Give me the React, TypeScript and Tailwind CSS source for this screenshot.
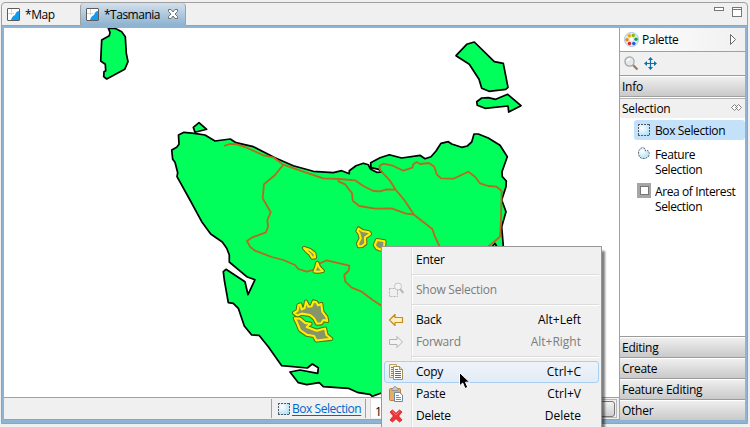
import React from 'react';

const LAND = [
  '178.5,135 184,132.3 194.3,133.3 205,135 215,141 230.3,139 236,142.7 253.3,146.7 275,157.7 293.3,165.7 313.3,171.3 333.3,172.7 341.7,170.7 349.3,173.7 349.3,170.7 356,165.7 363.3,163.3 368.3,164.7 370.3,169 376.7,172.3 381.7,172 378.7,169.3 371,167.7 370.7,162.7 380,157.7 389.3,154.7 401.7,158 420,155.3 425,158.7 431,156.7 436,151 441,143.3 448.3,141.7 451.7,144 461.7,147.3 467.3,146 471.7,142 474,134 478.3,134 488.3,138 500,145.3 507.3,156.7 502,171.7 502.3,176.7 506.3,181 506,186.7 501.7,200 506,211.7 501.7,226.7 503.3,246 503,260 497,247 495,243.5 492,247 490,300 450,396 390,396 380.7,393.3 372.3,396.3 370,394.3 358.3,392.7 348.3,388.3 323.3,386.7 319.3,382.7 306.7,384.7 298.3,382.7 290,372 300,370 317.7,373.3 318.3,367.7 312.3,364 307.3,368 281.7,365.7 268.3,346.7 259,335.3 251.7,335 244.3,326 238.3,308.3 233.3,303.3 228.3,302.7 224.3,280 223.3,271.7 226,269.3 245,281.7 248,294.7 255,279.7 246.7,276.7 229.3,262 229.3,255 226.7,248.3 222.3,242 210.7,234 201.7,221.7 190,200 177,176.7 177.7,172.7 175,162.3 172.7,159.3 171.7,150 176.7,147.3 179,144.3',
  '109,30 108.3,28.3 115,28.3 121.7,31.7 125.3,36.7 126.3,53.3 128,61.7 124.7,69.3 106.7,79 103.7,76.7 104,71.7 105.7,70.7 105.3,64.3 100.7,61 101.7,40 109.3,35.7 110,32.3',
  '199,122.7 206.7,129.3 195,132.3 193.3,127.3',
  '474.3,42 494.3,61.7 503.3,63.3 508,87.3 505.7,89.3 489,91.3 481.7,88.3 479,79.3 469.3,64.3 456,55.7 466.7,44.3',
  '476.7,101.7 481.7,98 488.3,97.7 495.7,99.3 507.7,94.3 521,105.7 508.7,112 508,106 485,108.3 477.3,105.3',
];

const ROADS = [
  '224,146 229.3,144 237,144.3 246.7,147.7 263.3,155.3 273.3,157.3 283.3,164.7 303.3,171.7 323.3,178.3 340,179 355,180.3 363.3,186 373.3,191 380,191.3 386.7,189.3 395.7,189.7',
  '283.3,164.7 275,175 264,184.3 262.7,198.3 270.7,212.3 267.3,220 268,226.7 266,232.3 251.7,237.7 247,241 250,246.7 255,250.7 271.7,257 283.3,260 295,265 298.3,269 306.7,271.7 316.7,269 320,263.3 326.7,260.3 349.3,265.7 348.7,270.7 344.3,275 345.3,281.7 351.7,287.7 361.7,291.7 372.7,300 380.7,305.3 390,312',
  '338,179 339,181.7 345,184.3 352,193.3 352.7,200.7 359.3,206 375,208.7 391.7,208.3 405,213.3 414,214.7',
  '380,170 390,180.7 395.7,189.7 405,201 414,214.7 432.3,229 435,236.7 439.3,246 442,252',
  '380,170 379.3,166 383.3,163.7 391.7,165.3 403.3,170.7 412.3,167.7 413.3,164.3 416.7,162 420,164 429,163 434.3,166.7 436.7,174.3 441,178.3 453.3,178.7 468.3,171.7 475,176.7 480,183.3 488.3,186 496.7,186.7 501.7,191 500.7,226.7 500,236.7 490,245.3 484,250',
];

const LAKES = [
  '304,248 310,250 314.3,253.3 315,257.3 312.3,257.7 310,254 307,251.5',
  '317.3,262.8 319,267 322.8,271 318.3,271.8 314.5,271.5 316,267.7',
  '358.6,228.5 362.3,231 369,232.2 370,234 365,237.3 365.3,243.5 362,246 358.8,246.2 358,243.5 360.7,238.3 359.3,233.3 357.5,231',
  '374.8,245 377,240 380,240.5 384.5,241.3 384.2,245 384,248.5 380,249.5 376.7,248',
  '294,313 297.6,310.7 298.4,305.3 300.4,304.4 301.7,309.4 304.6,308 306,301.6 308.5,306.7 311.5,306.3 313.5,301.5 316.3,302.2 318,305.3 321.3,304 322.3,311.7 326.3,316.9 327.2,321 323.3,320 321.2,323.3 317,323.6 314,318.3 310,315 301.7,313.6 297.3,315.5',
  '294.8,318.3 300,318.6 305,322.9 310.5,323.7 306.7,327 316.7,330.7 325,328.6 326.5,335 331.2,338.8 316.4,340.5 314,336 306.7,334.7 300,330 297.3,323.3',
];

function MapView() {
  return (
    <svg className="block h-[369px] w-[615px]" viewBox="4 28 615 369">
      <rect x="4" y="28" width="615" height="369" fill="#fff" />
      {LAND.map((p, i) => (
        <polygon key={i} points={p} fill="#00ff5a" stroke="#000" strokeWidth="1.7" strokeLinejoin="round" />
      ))}
      {ROADS.map((p, i) => (
        <polyline key={i} points={p} fill="none" stroke="#b86a1e" strokeWidth="1.8" strokeLinejoin="round" />
      ))}
      {LAKES.map((p, i) => (
        <g key={i} strokeLinejoin="round">
          <polygon points={p} fill="#86946a" stroke="#5a7018" strokeWidth="4.2" />
          <polygon points={p} fill="#86946a" stroke="#ffee00" strokeWidth="2.1" />
        </g>
      ))}
    </svg>
  );
}

function MapFileIcon() {
  return (
    <svg className="block h-[13px] w-[13px] shrink-0" viewBox="0 0 13 13">
      <rect x=".5" y=".5" width="12" height="12" rx=".5" fill="#fff" stroke="#5c5c5c" />
      <path d="M4.500 1v6M1 5.500h6" stroke="#d5d5d5" />
      <path d="M12 3C9 3.500 9 5 8 7C6 8 5 9 4 12H12Z" fill="#139bf4" />
    </svg>
  );
}

function BoxIcon() {
  return (
    <svg className="block h-[12px] w-[12px] shrink-0" viewBox="0 0 12 12">
      <defs>
        <radialGradient id="boxFill" cx=".35" cy=".35" r=".75">
          <stop offset="0" stopColor="#fff" />
          <stop offset="1" stopColor="#a9dcf5" />
        </radialGradient>
      </defs>
      <rect width="12" height="12" fill="url(#boxFill)" />
      <path d="M0 .5H12M0 11.500H12M.5 0V12M11.500 0V12" stroke="#4f5b66" strokeDasharray="2 1" />
    </svg>
  );
}

function LassoIcon() {
  return (
    <svg className="block h-[12px] w-[12px] shrink-0" viewBox="0 0 12 12">
      <path d="M2.500 1.500L4.500 .5L7 1.500L7.500 4L10 3.500L11.500 6.500L10.500 9.500L7.500 11.500H4L1.500 10L.5 7V4Z" fill="url(#boxFill)" stroke="#5d6c79" strokeDasharray="2 1" />
    </svg>
  );
}

function PaletteIcon() {
  const dots = [
    [5.3, 3.8, '#f0a800'], [9.3, 3.4, '#8cb800'], [12, 7.3, '#12a63c'],
    [9.8, 11.5, '#2258d8'], [5.5, 11.5, '#e02020'], [3, 7.7, '#f08a00'],
  ] as const;
  return (
    <svg className="block h-[15px] w-[15px] shrink-0" viewBox="0 0 15 15">
      <circle cx="7.500" cy="7.500" r="7" fill="#dcebf9" stroke="#a9c6e2" />
      {dots.map(([x, y, c]) => (
        <circle key={c} cx={x} cy={y} r="1.700" fill={c} />
      ))}
      <circle cx="7.500" cy="7.500" r="1.400" fill="#fff" />
    </svg>
  );
}

function Drawer({ label }: { label: string }) {
  return (
    <div className="flex h-[21px] items-center border-t border-[#9b9b9b] bg-linear-to-b from-[#f1f1f1] to-[#c9c9c9] pl-[2px] shadow-[inset_0_1px_0_#fff]">
      <span className="pt-px tracking-[-0.26px]">{label}</span>
    </div>
  );
}

function PalettePanel() {
  return (
    <div className="flex w-[126px] flex-col border-l border-[#a0a0a0] bg-white">
      <div className="flex h-[23px] items-center bg-linear-to-r from-white to-[#f0f0f0] pr-[8px] pl-[4px]">
        <PaletteIcon />
        <span className="ml-[3px] pt-px tracking-[-0.35px]">Palette</span>
        <svg className="ml-auto h-[11px] w-[8px]" viewBox="0 0 8 11">
          <path d="M1.500 .5V10.500L6.500 5.500Z" fill="#fff" stroke="#6b6b6b" />
        </svg>
      </div>
      <div className="flex h-[24px] items-center gap-[5px] border-t border-[#a0a0a0] bg-[#f0f0f0] pl-[4px]">
        <svg className="h-[15px] w-[15px]" viewBox="0 0 15 15">
          <path d="M9 9L13.500 13.500" stroke="#a07850" strokeWidth="2.200" />
          <circle cx="5.500" cy="5.500" r="4.600" fill="#e4e9ec" stroke="#a2a2a2" strokeWidth="1.200" />
          <path d="M3 5Q4 3 6 3" fill="none" stroke="#fff" strokeWidth="1.400" />
        </svg>
        <svg className="h-[13px] w-[13px]" viewBox="0 0 13 13">
          <path d="M6.500 1V12M1 6.500H12" stroke="#116fa8" strokeWidth="1.200" />
          <path d="M6.500 0L9 3H4ZM6.500 13L4 10H9ZM0 6.500L3 4V9ZM13 6.500L10 9V4Z" fill="#116fa8" />
        </svg>
      </div>
      <Drawer label="Info" />
      <div className="flex h-[22px] items-center border-t border-[#a0a0a0] bg-[#f0f0f0] pr-[3px] pl-[2px] shadow-[inset_0_1px_0_#fff,inset_0_2px_0_#b4b4b4]">
        <span className="pt-[2px]">Selection</span>
        <svg className="ml-auto h-[7px] w-[11px]" viewBox="0 0 11 7">
          <path d="M3.500 .5L.5 3.500L3.500 6.500L6.500 3.500ZM7.500 .5L10.500 3.500L7.500 6.500L4.500 3.500Z" fill="#fff" stroke="#666" strokeWidth=".8" />
        </svg>
      </div>
      <div className="flex flex-col pt-[2px] pl-[14px]">
        <div className="flex h-[20px] items-center gap-[5px] rounded-[3px] bg-[#c4e1fa] pl-[4px]">
          <BoxIcon />
          <span className="pt-[2px] tracking-[-0.38px]">Box Selection</span>
        </div>
        <div className="mt-[7px] flex gap-[5px] pl-[4px] leading-[15px]">
          <LassoIcon />
          <div className="tracking-[-0.38px]">
            <div>Feature</div>
            <div>Selection</div>
          </div>
        </div>
        <div className="mt-[7px] flex gap-[4px] pl-[3px] leading-[15px]">
          <div className="mt-[-1px] flex h-[15px] w-[14px] items-center justify-center bg-[#a6a6a6]">
            <div className="h-[9px] w-[9px] border border-[#777] bg-white" />
          </div>
          <div className="tracking-[-0.4px] whitespace-nowrap">
            <div>Area of Interest</div>
            <div>Selection</div>
          </div>
        </div>
      </div>
      <div className="mt-auto">
        <Drawer label="Editing" />
        <Drawer label="Create" />
        <Drawer label="Feature Editing" />
        <Drawer label="Other" />
      </div>
    </div>
  );
}

function ShowSelectionIcon() {
  return (
    <svg className="h-[16px] w-[16px]" viewBox="0 0 16 16" fill="none">
      <rect x="1.500" y="6.500" width="8" height="8" stroke="#b5b5b5" strokeDasharray="2 1" />
      <circle cx="10" cy="4.500" r="3.500" fill="#f4f4f4" stroke="#c4c4c4" />
      <path d="M12 7L15.500 11" stroke="#b9b9b9" strokeWidth="2" />
    </svg>
  );
}

function ArrowIcon({ forward }: { forward?: boolean }) {
  return (
    <svg className="h-[16px] w-[16px]" viewBox="0 0 16 16">
      {forward ? (
        <path d="M14.500 8L9 2.500V5.500H1.500V10.500H9V13.500Z" fill="#f3f3f3" stroke="#b3b3b3" strokeLinejoin="round" />
      ) : (
        <path d="M1.500 8L7 2.500V5.500H14.500V10.500H7V13.500Z" fill="#fff0c0" stroke="#c88a1c" strokeWidth="1.200" strokeLinejoin="round" />
      )}
    </svg>
  );
}

function CopyIcon() {
  return (
    <svg className="h-[16px] w-[16px]" viewBox="0 0 16 16">
      <path d="M1.500 .5H8.500V13.500H1.500Z" fill="#f8f4e4" stroke="#bda264" />
      <path d="M3 3.500H5M3 5.500H5M3 7.500H5M3 9.500H5M3 11.500H5" stroke="#5b82b8" />
      <path d="M5.500 2.500H11.500L14.500 5.500V15.500H5.500Z" fill="#fff" stroke="#a18f62" />
      <path d="M11.500 2.500V5.500H14.500" fill="#ead9a5" stroke="#a18f62" />
      <path d="M7 5.500H10M7 7.500H13M7 9.500H13M7 11.500H13M7 13.500H13" stroke="#4872ad" />
    </svg>
  );
}

function PasteIcon() {
  return (
    <svg className="h-[16px] w-[16px]" viewBox="0 0 16 16">
      <rect x="1.500" y="2.500" width="11" height="12" rx="1" fill="#e5ae62" stroke="#b98340" />
      <path d="M4 4.500V2.500H5L6 .8H8L9 2.500H10V4.500Z" fill="#c9cdd2" stroke="#8c8c8c" strokeWidth=".8" />
      <path d="M6.500 6.500H11.500L14.500 9V15.500H6.500Z" fill="#fff" stroke="#6b87ac" />
      <path d="M8 9.500H11M8 11.500H13M8 13.500H13" stroke="#7394c2" />
    </svg>
  );
}

function DeleteIcon() {
  return (
    <svg className="h-[16px] w-[16px]" viewBox="0 0 16 16">
      <path d="M2 4L4.500 2L8 5.300L11.500 2L14 4L10.600 8L14 12L11.500 14L8 10.700L4.500 14L2 12L5.400 8Z" fill="#ee3434" stroke="#d01c24" strokeWidth=".8" strokeLinejoin="round" />
      <path d="M4.500 3.500L8 7L11.500 3.500" fill="none" stroke="#ff8080" strokeWidth=".8" />
    </svg>
  );
}

type ItemProps = { label: string; keys?: string; icon?: React.ReactNode; off?: boolean; hot?: boolean };

function Item({ label, keys, icon, off, hot }: ItemProps) {
  return (
    <div
      className={
        'mx-[2px] flex h-[22px] items-center rounded-[3px] border pr-[17px] pl-[3px] ' +
        (hot ? 'border-[#a9cff2] bg-linear-to-b from-[#eff3f8] to-[#e2ecf6] ' : 'border-transparent ') +
        (off ? 'text-[#7c7c7c]' : 'text-black')
      }
    >
      <div className="w-[28px]">{icon}</div>
      <span>{label}</span>
      <span className="ml-auto tracking-[0px]">{keys}</span>
    </div>
  );
}

function Rule() {
  return <div className="my-[3px] mr-[2px] ml-[30px] h-[2px] border-t border-[#dcdcdc] bg-white" />;
}

function ContextMenu() {
  return (
    <div className="absolute top-[246px] left-[381px] h-[190px] w-[221px] border border-[#979797] bg-[#f0f0f0] pt-[2px] shadow-[4px_4px_2px_-1px_rgba(0,0,0,0.5)]">
      <div className="absolute top-[2px] left-[29px] h-[190px] w-[2px] border-l border-[#e0e0e0] bg-white" />
      <div className="relative">
        <Item label="Enter" />
        <Rule />
        <Item label="Show Selection" icon={<ShowSelectionIcon />} off />
        <Rule />
        <Item label="Back" keys="Alt+Left" icon={<ArrowIcon />} />
        <Item label="Forward" keys="Alt+Right" icon={<ArrowIcon forward />} off />
        <Rule />
        <Item label="Copy" keys="Ctrl+C" icon={<CopyIcon />} hot />
        <Item label="Paste" keys="Ctrl+V" icon={<PasteIcon />} />
        <Item label="Delete" keys="Delete" icon={<DeleteIcon />} />
      </div>
      <svg className="absolute top-[124px] left-[76px] h-[20px] w-[14px]" viewBox="0 0 14 20">
        <path d="M1.500 1.500V15L4.700 12L7 17.500L9.800 16.300L7.500 11.200H11.700Z" fill="#000" stroke="#fff" />
      </svg>
    </div>
  );
}

export default function App() {
  return (
    <div className="relative h-[427px] w-[750px] overflow-hidden bg-[#f0f0f0] pt-[2px] pl-px font-['Open_Sans','Noto_Sans',sans-serif] text-[12px] leading-[16px] tracking-[-0.25px] text-black">
      <div className="flex h-[422px] w-[747px] flex-col rounded-t-[4px] border border-[#a0a0a0]">
        <div className="flex h-[22px] shrink-0">
          <div className="flex w-[78px] items-center pl-[5px]">
            <MapFileIcon />
            <span className="ml-[5px] pt-[2px] tracking-[-0.4px]">*Map</span>
          </div>
          <div className="flex w-[106px] items-center rounded-t-[4px] border-x border-[#a0a0a0] bg-linear-to-b from-[#d3e0eb] to-[#8fb3d2] pl-[5px]">
            <MapFileIcon />
            <span className="ml-[5px] w-[56px] pt-[2px] tracking-[-0.5px]">*Tasmania</span>
            <svg className="ml-[8px] h-[10px] w-[10px]" viewBox="0 0 10 10">
              <path d="M.5 .5H3L5 3L7 .5H9.500V2.500L7 5L9.500 7.500V9.500H7L5 7L3 9.500H.5V7.500L3 5L.5 2.500Z" fill="#fff" stroke="#666" strokeWidth=".9" />
            </svg>
          </div>
          <div className="flex grow justify-end gap-[8px] pt-[4px] pr-[5px]">
            <div className="h-[4px] w-[10px] border border-[#777] bg-white" />
            <div className="h-[10px] w-[10px] border border-[#777] bg-white">
              <div className="mt-px h-px bg-[#777]" />
            </div>
          </div>
        </div>
        <div className="flex h-[3px] shrink-0 bg-[#8fb3d2]">
          <div className="h-px w-[78px] bg-[#a0a0a0]" />
          <div className="w-[106px]" />
          <div className="h-px grow bg-[#a0a0a0]" />
        </div>
        <div className="flex h-[395px] border-x-2 border-b-[3px] border-[#8fb3d2]">
          <div className="flex w-[615px] flex-col">
            <MapView />
            <div className="flex h-[23px] border-y border-[#a0a0a0] bg-[#f0f0f0] py-px">
              <div className="w-[268px] border-r border-[#a0a0a0]" />
              <div className="flex w-[94px] items-center gap-[2px] border-r border-[#a0a0a0] pl-[6px]">
                <BoxIcon />
                <span className="pt-px tracking-[-0.45px] whitespace-nowrap text-[#0066cc] underline underline-offset-2">Box Selection</span>
              </div>
              <div className="ml-[4px] flex w-[120px] items-center border-l border-[#d8d8d8] bg-white pt-[6px] pl-[4px]">1</div>
              <div className="mr-[2px] ml-auto flex w-[60px] items-center border border-[#b8b8b8] p-px">
                <div className="h-[16px] grow rounded-[3px] border border-[#777] bg-linear-to-b from-[#f2f2f2] to-[#cfcfcf]" />
              </div>
            </div>
          </div>
          <PalettePanel />
        </div>
      </div>
      <ContextMenu />
    </div>
  );
}
